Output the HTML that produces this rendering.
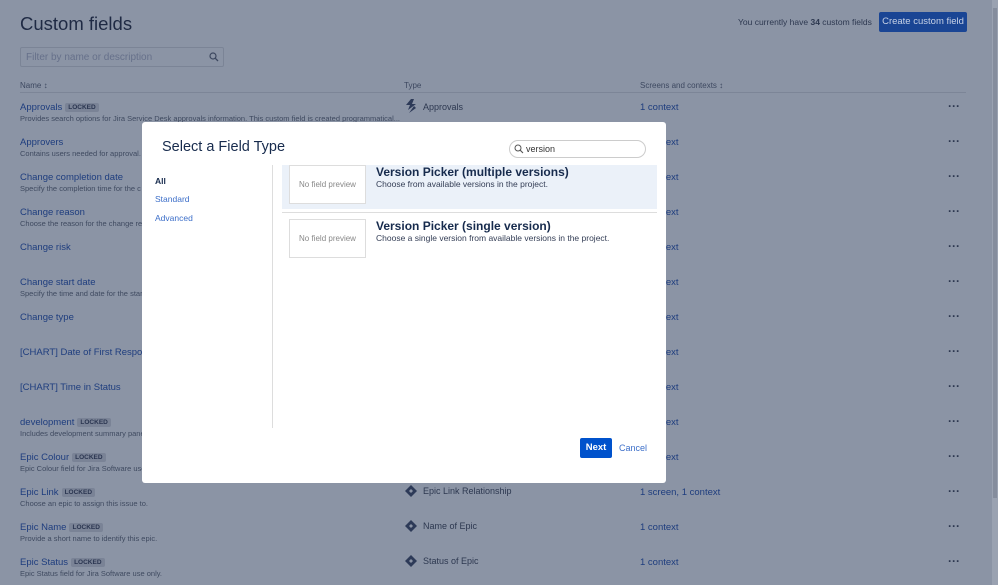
<!DOCTYPE html>
<html><head><meta charset="utf-8"><style>
*{margin:0;padding:0;box-sizing:border-box}
body{width:998px;height:585px;overflow:hidden;background:#8b94a5;font-family:"Liberation Sans",sans-serif;position:relative;color:#27324a}
.abs{position:absolute;white-space:nowrap}
h1{position:absolute;left:20px;top:13px;font-size:18.5px;font-weight:normal;color:#1f2a44}
.filter{position:absolute;left:20px;top:47px;width:204px;height:20px;border:1px solid #7b8496;border-radius:2px;font-size:10px;color:#66708a;padding:4px 5px}
.hdr{font-size:8px;color:#3d4860;top:81px}
.line{position:absolute;left:20px;top:92px;width:946px;height:1px;background:#7c8597}
.nm{font-size:9.5px;color:#1e3d7e}
.ds{font-size:7.5px;color:#3f4a60}
.lk{display:inline-block;background:#7a8396;color:#2a3550;font-size:6.5px;font-weight:bold;padding:1px 3px;border-radius:2px;margin-left:3px;vertical-align:1px}
.ty{font-size:9px;color:#2d3850}
.cx{font-size:9.5px;color:#1e3d7e}
.dots{font-size:12px;color:#2d3850;font-weight:bold}
.btn{position:absolute;left:879px;top:12px;width:88px;height:20px;background:#1a4594;color:#c8d2e6;font-size:9.5px;text-align:center;line-height:20px;border-radius:2px}
.modal{position:absolute;left:142px;top:122px;width:524px;height:361px;background:#fff;border-radius:3px;z-index:5}
.card{position:absolute;left:147px;width:77px;height:39px;border:1px solid #ddd;font-size:8px;color:#888;text-align:center;line-height:37px}
.t{position:absolute;left:234px;font-size:12px;font-weight:bold;color:#172b4d}
.d{position:absolute;left:234px;font-size:8.5px;color:#333d55}
</style></head><body>
<h1>Custom fields</h1>
<div class="filter">Filter by name or description</div>
<svg class="abs" style="left:209px;top:52px" width="10" height="10" viewBox="0 0 10 10"><circle cx="4" cy="4" r="3" fill="none" stroke="#3d4860" stroke-width="1.2"/><path d="M6.2 6.2L9 9" stroke="#3d4860" stroke-width="1.3"/></svg>
<div class="abs" style="left:738px;top:17px;font-size:8.5px;color:#2d3850">You currently have <b>34</b> custom fields</div>
<div class="btn">Create custom field</div>
<div class="abs hdr" style="left:20px">Name ↕</div>
<div class="abs hdr" style="left:404px">Type</div>
<div class="abs hdr" style="left:640px">Screens and contexts ↕</div>
<div class="line"></div>

<div class="abs nm" style="left:20px;top:102px">Approvals<span class="lk">LOCKED</span></div>
<div class="abs ds" style="left:20px;top:114px">Provides search options for Jira Service Desk approvals information. This custom field is created programmatical...</div>
<svg class="abs" style="left:405px;top:99px" width="12" height="14" viewBox="0 0 12 14"><path d="M6 0L1 6h4L3 11 11 5H7L9 0z" fill="#2d3a58"/><path d="M9 7L4 14 11 9z" fill="#2d3a58"/></svg>
<div class="abs ty" style="left:423px;top:102px">Approvals</div>

<div class="abs nm" style="left:20px;top:137px">Approvers</div>
<div class="abs ds" style="left:20px;top:149px">Contains users needed for approval. T</div>
<div class="abs nm" style="left:20px;top:172px">Change completion date</div>
<div class="abs ds" style="left:20px;top:184px">Specify the completion time for the c</div>
<div class="abs nm" style="left:20px;top:207px">Change reason</div>
<div class="abs ds" style="left:20px;top:219px">Choose the reason for the change rec</div>
<div class="abs nm" style="left:20px;top:242px">Change risk</div>
<div class="abs nm" style="left:20px;top:277px">Change start date</div>
<div class="abs ds" style="left:20px;top:289px">Specify the time and date for the start</div>
<div class="abs nm" style="left:20px;top:312px">Change type</div>
<div class="abs nm" style="left:20px;top:347px">[CHART] Date of First Response</div>
<div class="abs nm" style="left:20px;top:382px">[CHART] Time in Status</div>
<div class="abs nm" style="left:20px;top:417px">development<span class="lk">LOCKED</span></div>
<div class="abs ds" style="left:20px;top:429px">Includes development summary pane</div>
<div class="abs nm" style="left:20px;top:452px">Epic Colour<span class="lk">LOCKED</span></div>
<div class="abs ds" style="left:20px;top:464px">Epic Colour field for Jira Software use</div>
<div class="abs nm" style="left:20px;top:487px">Epic Link<span class="lk">LOCKED</span></div>
<div class="abs ds" style="left:20px;top:499px">Choose an epic to assign this issue to.</div>
<div class="abs nm" style="left:20px;top:522px">Epic Name<span class="lk">LOCKED</span></div>
<div class="abs ds" style="left:20px;top:534px">Provide a short name to identify this epic.</div>
<div class="abs nm" style="left:20px;top:557px">Epic Status<span class="lk">LOCKED</span></div>
<div class="abs ds" style="left:20px;top:569px">Epic Status field for Jira Software use only.</div>

<svg width="0" height="0" style="position:absolute"><defs><symbol id="dm" viewBox="0 0 12 12"><path d="M6 0L12 6 6 12 0 6z" fill="#2d3a58"/><path d="M6 4L8 6 6 8 4 6z" fill="#8b94a5"/></symbol></defs></svg>
<svg class="abs" style="left:405px;top:485px" width="12" height="12"><use href="#dm"/></svg>
<div class="abs ty" style="left:423px;top:486px">Epic Link Relationship</div>
<svg class="abs" style="left:405px;top:520px" width="12" height="12"><use href="#dm"/></svg>
<div class="abs ty" style="left:423px;top:521px">Name of Epic</div>
<svg class="abs" style="left:405px;top:555px" width="12" height="12"><use href="#dm"/></svg>
<div class="abs ty" style="left:423px;top:556px">Status of Epic</div>

<div class="abs cx" style="left:640px;top:102px">1 context</div>
<div class="abs cx" style="left:640px;top:137px">1 context</div>
<div class="abs cx" style="left:640px;top:172px">1 context</div>
<div class="abs cx" style="left:640px;top:207px">1 context</div>
<div class="abs cx" style="left:640px;top:242px">1 context</div>
<div class="abs cx" style="left:640px;top:277px">1 context</div>
<div class="abs cx" style="left:640px;top:312px">1 context</div>
<div class="abs cx" style="left:640px;top:347px">1 context</div>
<div class="abs cx" style="left:640px;top:382px">1 context</div>
<div class="abs cx" style="left:640px;top:417px">1 context</div>
<div class="abs cx" style="left:640px;top:452px">1 context</div>
<div class="abs cx" style="left:640px;top:487px">1 screen, 1 context</div>
<div class="abs cx" style="left:640px;top:522px">1 context</div>
<div class="abs cx" style="left:640px;top:557px">1 context</div>

<div class="abs dots" style="left:948px;top:99px">···</div>
<div class="abs dots" style="left:948px;top:134px">···</div>
<div class="abs dots" style="left:948px;top:169px">···</div>
<div class="abs dots" style="left:948px;top:204px">···</div>
<div class="abs dots" style="left:948px;top:239px">···</div>
<div class="abs dots" style="left:948px;top:274px">···</div>
<div class="abs dots" style="left:948px;top:309px">···</div>
<div class="abs dots" style="left:948px;top:344px">···</div>
<div class="abs dots" style="left:948px;top:379px">···</div>
<div class="abs dots" style="left:948px;top:414px">···</div>
<div class="abs dots" style="left:948px;top:449px">···</div>
<div class="abs dots" style="left:948px;top:484px">···</div>
<div class="abs dots" style="left:948px;top:519px">···</div>
<div class="abs dots" style="left:948px;top:554px">···</div>

<div class="abs" style="left:992px;top:0;width:6px;height:585px;background:#9aa2b1"></div>
<div class="abs" style="left:993px;top:8px;width:4px;height:490px;background:#858d9d"></div>

<div class="modal">
  <div class="abs" style="left:20px;top:17px;font-size:14.5px;color:#172b4d">Select a Field Type</div>
  <div class="abs" style="left:367px;top:18px;width:137px;height:18px;border:1px solid #ccc;border-radius:9px;font-size:9px;color:#333;padding:3px 0 0 16px">version</div>
  <svg class="abs" style="left:372px;top:22px" width="10" height="10" viewBox="0 0 10 10"><circle cx="4" cy="4" r="3" fill="none" stroke="#555" stroke-width="1"/><path d="M6.2 6.2L9 9" stroke="#555" stroke-width="1.1"/></svg>
  <div class="abs" style="left:13px;top:54px;font-size:8.5px;font-weight:bold;color:#172b4d">All</div>
  <div class="abs" style="left:13px;top:72px;font-size:8.5px;color:#3d6fc9">Standard</div>
  <div class="abs" style="left:13px;top:91px;font-size:8.5px;color:#3d6fc9">Advanced</div>
  <div class="abs" style="left:130px;top:43px;width:1px;height:263px;background:#ddd"></div>
  <div class="abs" style="left:140px;top:43px;width:375px;height:44px;background:#ebf1f9"></div>
  <div class="abs" style="left:140px;top:90px;width:375px;height:1px;background:#ddd"></div>
  <div class="card" style="top:43px;background:#fff">No field preview</div>
  <div class="t" style="top:43px">Version Picker (multiple versions)</div>
  <div class="d" style="top:57px">Choose from available versions in the project.</div>
  <div class="card" style="top:97px">No field preview</div>
  <div class="t" style="top:97px">Version Picker (single version)</div>
  <div class="d" style="top:111px">Choose a single version from available versions in the project.</div>
  <div class="abs" style="left:438px;top:316px;width:32px;height:20px;background:#0052cc;color:#fff;font-size:9.5px;font-weight:bold;text-align:center;line-height:20px;border-radius:2px">Next</div>
  <div class="abs" style="left:477px;top:321px;font-size:9px;color:#3d6fc9">Cancel</div>
</div>
</body></html>
